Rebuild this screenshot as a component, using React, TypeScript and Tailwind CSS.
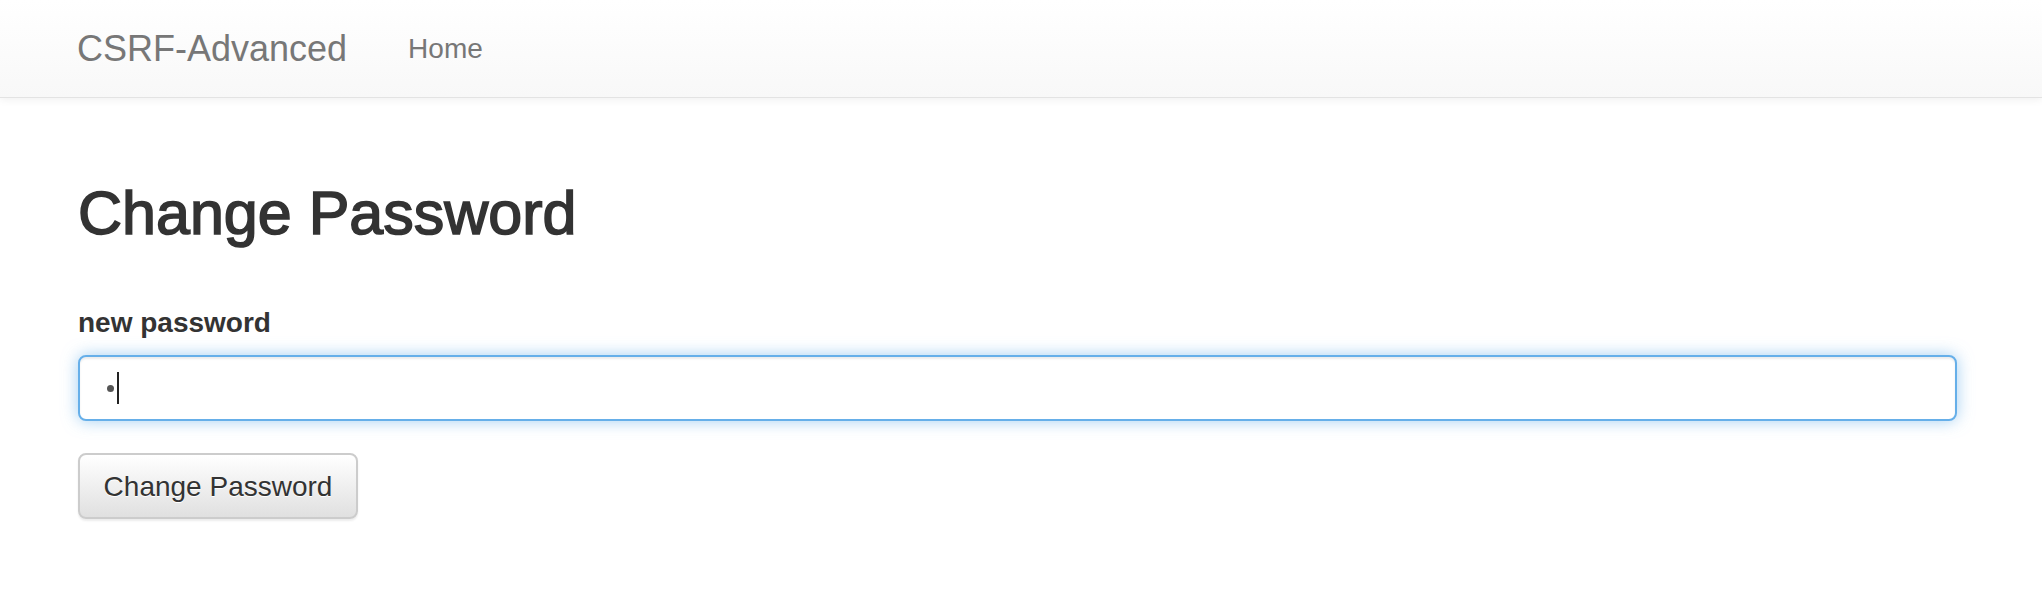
export default function App() {
  return (
    <div className="min-h-screen bg-white text-[#333]" style={{ fontFamily: '"Liberation Sans", Arial, sans-serif' }}>
      {/* Navbar */}
      <nav className="h-[98px] border-b border-[#e3e3e3] bg-gradient-to-b from-white to-[#f8f8f8] shadow-[0_2px_8px_rgba(0,0,0,0.06)]">
        <div className="flex items-start pl-[77px] pt-[29px]">
          <a className="text-[36px] leading-[40px] text-[#777]">CSRF-Advanced</a>
          <a className="ml-[61px] text-[28px] leading-[40px] text-[#777]">Home</a>
        </div>
      </nav>

      <div className="pl-[78px] pr-[85px]">
        <h2 className="mt-[82px] text-[61px] font-medium leading-[66px] text-[#333] [-webkit-text-stroke:1.6px_#333]">Change Password</h2>

        <form className="mt-[57px]" onSubmit={e => e.preventDefault()}>
          <label className="block text-[28px] font-bold leading-[40px] text-[#333]">new password</label>
          <div className="mt-[12px] flex h-[66px] items-center rounded-[8px] border-2 border-[#66afe9] bg-white pl-[27px] shadow-[inset_0_2px_2px_rgba(0,0,0,0.075),0_0_16px_rgba(102,175,233,0.6)]">
            <span className="h-[7px] w-[7px] rounded-full bg-[#555]" />
            <span className="ml-[3px] h-[32px] w-[2px] bg-[#222]" />
          </div>

          <button
            type="submit"
            className="mt-[32px] h-[66px] w-[280px] rounded-[8px] border-2 border-[#ccc] bg-gradient-to-b from-white to-[#e0e0e0] pt-[2px] text-[28px] leading-[40px] text-[#333] shadow-[0_2px_2px_rgba(0,0,0,0.075)] [text-shadow:0_1px_0_#fff]"
          >
            Change Password
          </button>
        </form>
      </div>
    </div>
  )
}
